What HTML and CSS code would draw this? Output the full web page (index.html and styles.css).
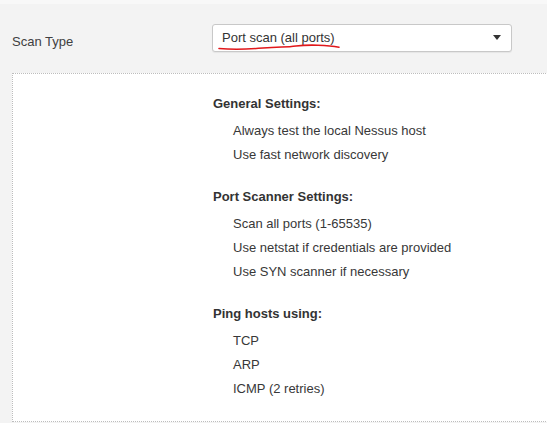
FILE: index.html
```html
<!DOCTYPE html>
<html>
<head>
<meta charset="utf-8">
<link rel="stylesheet" href="styles.css">
</head>
<body>
<div class="page">
  <div class="row">
    <label class="label">Scan Type</label>
    <div class="select">
      <span class="select-text">Port scan (all ports)</span>
      <span class="caret"></span>
      <svg class="scribble" width="140" height="10" viewBox="0 0 140 10">
        <path d="M1 5.5 C 12 6.5, 28 6.5, 45 5 S 68 4.5, 78 3 C 90 1.5, 110 2, 121 4.2" fill="none" stroke="#e1181b" stroke-width="1.6" stroke-linecap="round"/>
      </svg>
    </div>
  </div>
  <div class="panel">
    <div class="section">
      <div class="heading">General Settings:</div>
      <ul class="items">
        <li>Always test the local Nessus host</li>
        <li>Use fast network discovery</li>
      </ul>
    </div>
    <div class="section">
      <div class="heading">Port Scanner Settings:</div>
      <ul class="items">
        <li>Scan all ports (1-65535)</li>
        <li>Use netstat if credentials are provided</li>
        <li>Use SYN scanner if necessary</li>
      </ul>
    </div>
    <div class="section">
      <div class="heading">Ping hosts using:</div>
      <ul class="items">
        <li>TCP</li>
        <li>ARP</li>
        <li>ICMP (2 retries)</li>
      </ul>
    </div>
  </div>
</div>
</body>
</html>
```
FILE: styles.css
```css
html, body {
  margin: 0;
  padding: 0;
  overflow: hidden;
}
body {
  background: #f3f3f3;
  font-family: "Liberation Sans", Arial, sans-serif;
  font-size: 13px;
  color: #333;
  width: 547px;
  height: 423px;
}
.page {
  border-top: 4px solid #f8f8f8;
  width: 547px;
  height: 419px;
  overflow: hidden;
}
.row {
  display: flex;
  align-items: center;
  padding-left: 12px;
  padding-top: 20px;
  height: 28px;
}
.label {
  width: 200px;
  color: #404040;
  position: relative;
  top: 3px;
}
.select {
  position: relative;
  box-sizing: border-box;
  width: 300px;
  height: 28px;
  background: #fff;
  border: 1px solid #c8c8c8;
  border-radius: 3px;
  box-shadow: 0 1px 1px rgba(0,0,0,0.06);
  display: flex;
  align-items: center;
  padding-left: 9px;
  padding-right: 10px;
}
.select-text {
  flex: 1;
  color: #333;
  position: relative;
  top: -1px;
}
.caret {
  width: 0;
  height: 0;
  border-left: 4px solid transparent;
  border-right: 4px solid transparent;
  border-top: 5px solid #333;
  position: relative;
  top: -1px;
}
.scribble {
  position: absolute;
  left: 5px;
  top: 18px;
}
.panel {
  margin-top: 21px;
  margin-left: 12px;
  width: 600px;
  background: #fff;
  border: 1px dotted #bdbdbd;
  border-right: none;
  padding: 18px 0 20px 200px;
  box-sizing: border-box;
}
.section + .section {
  margin-top: 18px;
}
.heading {
  font-weight: bold;
  line-height: 24px;
  color: #333;
  margin-bottom: 3px;
}
.items {
  list-style: none;
  margin: 0;
  padding: 0 0 0 20px;
}
.items li {
  line-height: 24px;
  color: #383838;
}
```
